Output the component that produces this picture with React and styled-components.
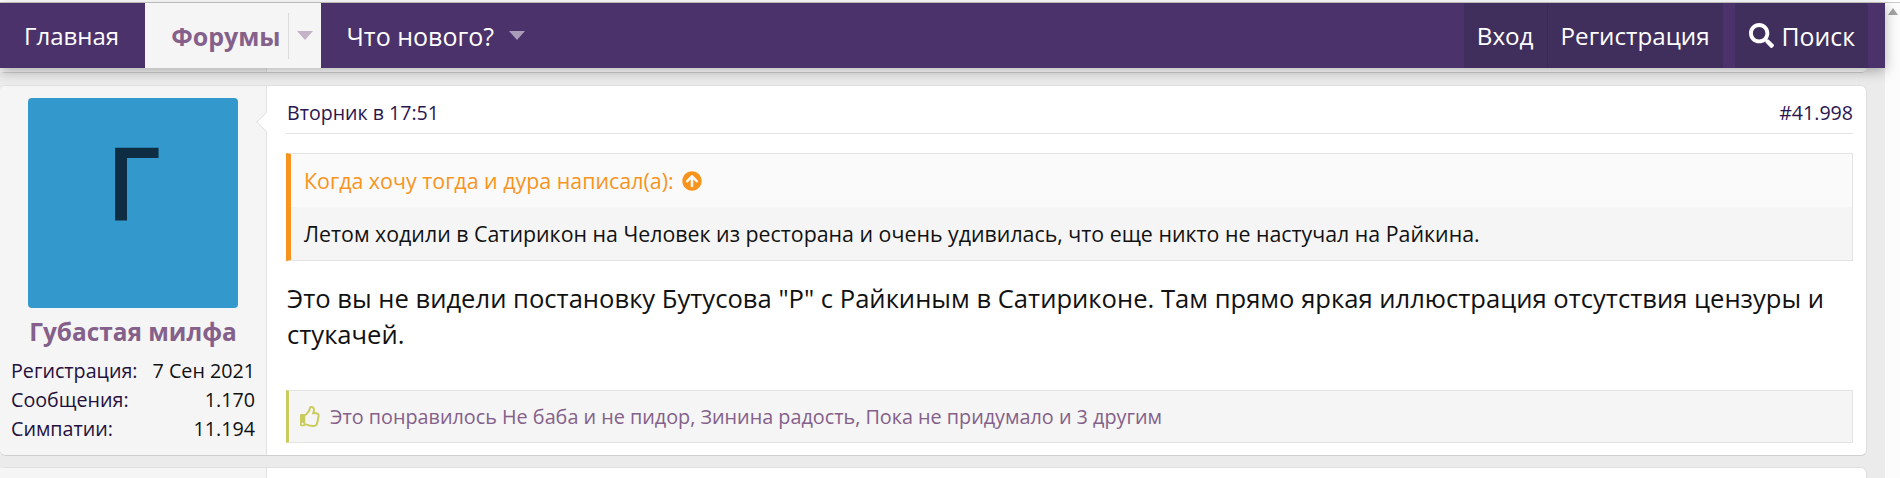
import React from "react";
import styled, { createGlobalStyle } from "styled-components";
import { FaArrowCircleUp, FaSearch, FaRegThumbsUp } from "react-icons/fa";

const GlobalStyle = createGlobalStyle`
    html, body {
        margin: 0;
        padding: 0;
        height: 478px;
        overflow: hidden;
        background: #ebebeb;
        font-family: "Open Sans", "Noto Sans", sans-serif;
        color: #000;
    }
`

const Page = styled.div`
    width: 1900px;
    height: 478px;
    overflow: hidden;
    display: flex;
    flex-direction: column;
`

const TopStrip = styled.div`
    height: 3px;
    flex: none;
    box-sizing: border-box;
    background: #fff;
    border-bottom: 1px solid #cccccc;
`

const Row = styled.div`
    flex: 1;
    display: flex;
    min-height: 0;
`

const Main = styled.div`
    width: 1885px;
    display: flex;
    flex-direction: column;
    background: #ebebeb;
`

const Scrollbar = styled.div`
    width: 15px;
    background: #fcfcfc;
    display: flex;
    justify-content: center;
    padding-top: 5px;
    box-sizing: border-box;
`

const ScrollUp = styled.div`
    width: 0;
    height: 0;
    border-left: 5px solid transparent;
    border-right: 5px solid transparent;
    border-bottom: 7px solid #a3a3a3;
`

const Nav = styled.div`
    position: relative;
    z-index: 2;
    height: 65px;
    flex: none;
    display: flex;
    justify-content: space-between;
    background: #4b326b;
    box-shadow: 0 3px 12px rgba(0, 0, 0, 0.3);
    font-size: 24.2px;
    color: #fff;
`

const NavGroup = styled.div`
    display: flex;
    align-items: stretch;
`

const NavItem = styled.div`
    display: flex;
    align-items: center;
    padding: 0 ${props => props.pad || 26}px;
    font-size: ${props => props.size || 24.2}px;
    color: #fff;
    background: ${props => props.dark ? "#402e5c" : "transparent"};
    border-left: ${props => props.divider ? "1px solid #3a2a55" : "none"};
`

const HomeItem = styled(NavItem)`
    padding: 0 26px 0 24px;
`

const ActiveTab = styled(NavItem)`
    padding: 0 8px 0 26px;
    font-weight: 700;
    font-size: 25px;
    color: #84608a;
    background: #f5f5f5;
`

const Caret = styled.span`
    width: 0;
    height: 0;
    border-left: 8px solid transparent;
    border-right: 8px solid transparent;
    border-top: 9px solid ${props => props.color};
    margin-left: ${props => props.gap}px;
`

const CaretSep = styled.span`
    width: 1px;
    height: 46px;
    background: #dcdcdc;
    margin-left: 7px;
`

const SearchBox = styled(NavItem)`
    margin-left: 12px;
    margin-right: 17px;
    gap: 8px;
    border-radius: 4px 4px 0 0;
    padding: 0 13px 0 14px;
    font-size: 24.8px;
`

const PrevStub = styled.div`
    height: 5px;
    flex: none;
    width: 1867px;
    display: flex;
    background: #fff;
    border-bottom: 1px solid #d0d0d0;
    border-radius: 0 0 6px 6px;
    box-sizing: border-box;
`

const Card = styled.div`
    flex: none;
    width: 1867px;
    display: flex;
    background: #fff;
    border: 1px solid #dfdfdf;
    border-bottom-color: #cfcfcf;
    border-left: none;
    border-radius: 6px;
    box-sizing: border-box;
    margin-top: ${props => props.top}px;
    height: ${props => props.h}px;
`

const Side = styled.div`
    position: relative;
    width: 267px;
    flex: none;
    background: #f5f5f5;
    border-right: 1px solid #e3e3e3;
    border-radius: 6px 0 0 6px;
    box-sizing: border-box;
    padding: 12px 11px 0 11px;
    display: flex;
    flex-direction: column;
`

const SideStub = styled.div`
    width: 267px;
    flex: none;
    background: #f5f5f5;
    border-right: 1px solid #e3e3e3;
    box-sizing: border-box;
`

const Pointer = styled.span`
    position: absolute;
    top: 29px;
    right: -7px;
    width: 14px;
    height: 14px;
    transform: rotate(45deg);
    background: #fff;
    border-left: 1px solid #e3e3e3;
    border-bottom: 1px solid #e3e3e3;
    box-sizing: border-box;
`

const Avatar = styled.div`
    width: 210px;
    height: 210px;
    margin-left: 17px;
    padding-bottom: 44px;
    box-sizing: border-box;
    background: #3399cc;
    border-radius: 4px;
    color: #0f2d42;
    font-size: 102px;
    font-weight: 600;
    display: flex;
    align-items: center;
    justify-content: center;
    line-height: 1;
`

const UserName = styled.div`
    text-align: center;
    color: #84608a;
    font-weight: 700;
    font-size: 24.4px;
    line-height: 30px;
    margin-top: 9px;
`

const Stats = styled.div`
    margin-top: 9px;
    font-size: 19.7px;
    color: #24103d;
`

const Stat = styled.div`
    display: flex;
    justify-content: space-between;
    height: 29px;
    line-height: 29px;
`

const StatValue = styled.span`
    color: #111;
`

const Body = styled.div`
    flex: 1;
    display: flex;
    flex-direction: column;
    padding: 0 13px 0 19px;
    min-width: 0;
`

const PostHead = styled.div`
    height: 42px;
    padding: 5px 0 0 1px;
    display: flex;
    justify-content: space-between;
    align-items: center;
    font-size: 19.6px;
    color: #2b1650;
    border-bottom: 1px solid #e3e3e3;
    flex: none;
`

const Quote = styled.div`
    margin-top: 19px;
    border: 1px solid #e3e3e3;
    border-left: 5px solid #f7941d;
    flex: none;
`

const QuoteHead = styled.div`
    height: 53px;
    display: flex;
    align-items: center;
    gap: 8px;
    background: #fafafa;
    padding-left: 13px;
    color: #f7941d;
    font-size: 21.4px;
`

const QuoteBody = styled.div`
    height: 53px;
    display: flex;
    align-items: center;
    background: #f5f5f5;
    padding-left: 13px;
    font-size: 21.35px;
    color: #111;
`

const PostText = styled.div`
    margin-top: 20px;
    padding-left: 1px;
    font-size: 25.6px;
    line-height: 36px;
    color: #111;
    flex: none;
`

const Likes = styled.div`
    margin-top: 37px;
    height: 53px;
    box-sizing: border-box;
    border: 1px solid #e3e3e3;
    border-left: 3px solid #c9cc5d;
    background: #f5f5f5;
    display: flex;
    align-items: center;
    gap: 9px;
    padding-left: 11px;
    font-size: 19.8px;
    color: #84608a;
    flex: none;
`

export default function App() {
    return (
        <Page>
            <GlobalStyle />
            <TopStrip />
            <Row>
                <Main>
                    <Nav>
                        <NavGroup>
                            <HomeItem size={24}>Главная</HomeItem>
                            <ActiveTab>
                                Форумы
                                <CaretSep />
                                <Caret color="#c4b2c8" gap={8} />
                            </ActiveTab>
                            <NavItem size={25}>
                                Что нового?
                                <Caret color="#a99cb8" gap={15} />
                            </NavItem>
                        </NavGroup>
                        <NavGroup>
                            <NavItem dark pad={13}>Вход</NavItem>
                            <NavItem dark divider pad={13}>Регистрация</NavItem>
                            <SearchBox dark>
                                <FaSearch size={25} />
                                Поиск
                            </SearchBox>
                        </NavGroup>
                    </Nav>
                    <PrevStub>
                        <SideStub />
                    </PrevStub>
                    <Card top={12} h={371}>
                        <Side>
                            <Pointer />
                            <Avatar>Г</Avatar>
                            <UserName>Губастая милфа</UserName>
                            <Stats>
                                <Stat><span>Регистрация:</span><StatValue>7 Сен 2021</StatValue></Stat>
                                <Stat><span>Сообщения:</span><StatValue>1.170</StatValue></Stat>
                                <Stat><span>Симпатии:</span><StatValue>11.194</StatValue></Stat>
                            </Stats>
                        </Side>
                        <Body>
                            <PostHead>
                                <span>Вторник в 17:51</span>
                                <span>#41.998</span>
                            </PostHead>
                            <Quote>
                                <QuoteHead>
                                    Когда хочу тогда и дура написал(а):
                                    <FaArrowCircleUp size={20} />
                                </QuoteHead>
                                <QuoteBody>Летом ходили в Сатирикон на Человек из ресторана и очень удивилась, что еще никто не настучал на Райкина.</QuoteBody>
                            </Quote>
                            <PostText>Это вы не видели постановку Бутусова "Р" с Райкиным в Сатириконе. Там прямо яркая иллюстрация отсутствия цензуры и стукачей.</PostText>
                            <Likes>
                                <FaRegThumbsUp size={21} color="#c9cc5d" />
                                Это понравилось Не баба и не пидор, Зинина радость, Пока не придумало и 3 другим
                            </Likes>
                        </Body>
                    </Card>
                    <Card top={11} h={40}>
                        <SideStub />
                    </Card>
                </Main>
                <Scrollbar>
                    <ScrollUp />
                </Scrollbar>
            </Row>
        </Page>
    );
}
